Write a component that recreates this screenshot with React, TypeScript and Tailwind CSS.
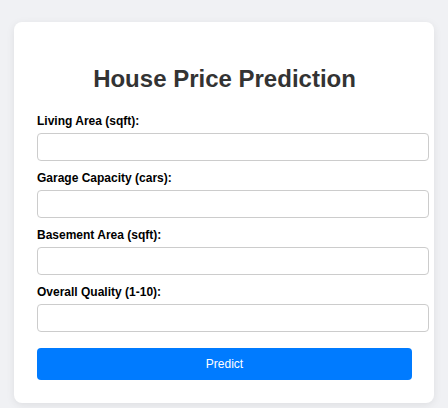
import React from 'react';

const FIELDS = [
  { id: 'area', label: 'Living Area (sqft):' },
  { id: 'garage', label: 'Garage Capacity (cars):' },
  { id: 'basement', label: 'Basement Area (sqft):' },
  { id: 'quality', label: 'Overall Quality (1-10):' },
];

const App: React.FC = () => {
  return (
    <div className="min-h-[408px] w-[448px] bg-[#f0f1f4] pt-[22px] pl-[14px] font-['Liberation_Sans',Arial,sans-serif]">
      <div className="w-[420px] rounded-lg bg-white pt-[43px] pb-[23px] pl-[23px] shadow-[0_2px_8px_rgba(0,0,0,0.08)]">
        <div className="w-[375px]">
          <h2 className="mb-[22px] text-center text-2xl leading-[27px] font-bold text-[#333]">
            House Price Prediction
          </h2>

          <form onSubmit={(e) => e.preventDefault()}>
            {FIELDS.map((field) => (
              <div key={field.id} className="mb-[10px]">
                <label htmlFor={field.id} className="mb-[5px] block text-xs leading-[14px] font-bold text-black">
                  {field.label}
                </label>
                <input
                  id={field.id}
                  type="number"
                  className="block h-[28px] w-[392px] rounded border border-[#ccc] bg-white px-2 text-xs outline-none"
                />
              </div>
            ))}

            <button
              type="submit"
              className="mt-[16px] block h-[32px] w-full rounded bg-[#007bff] text-xs text-white"
            >
              Predict
            </button>
          </form>
        </div>
      </div>
    </div>
  );
};

export default App;
